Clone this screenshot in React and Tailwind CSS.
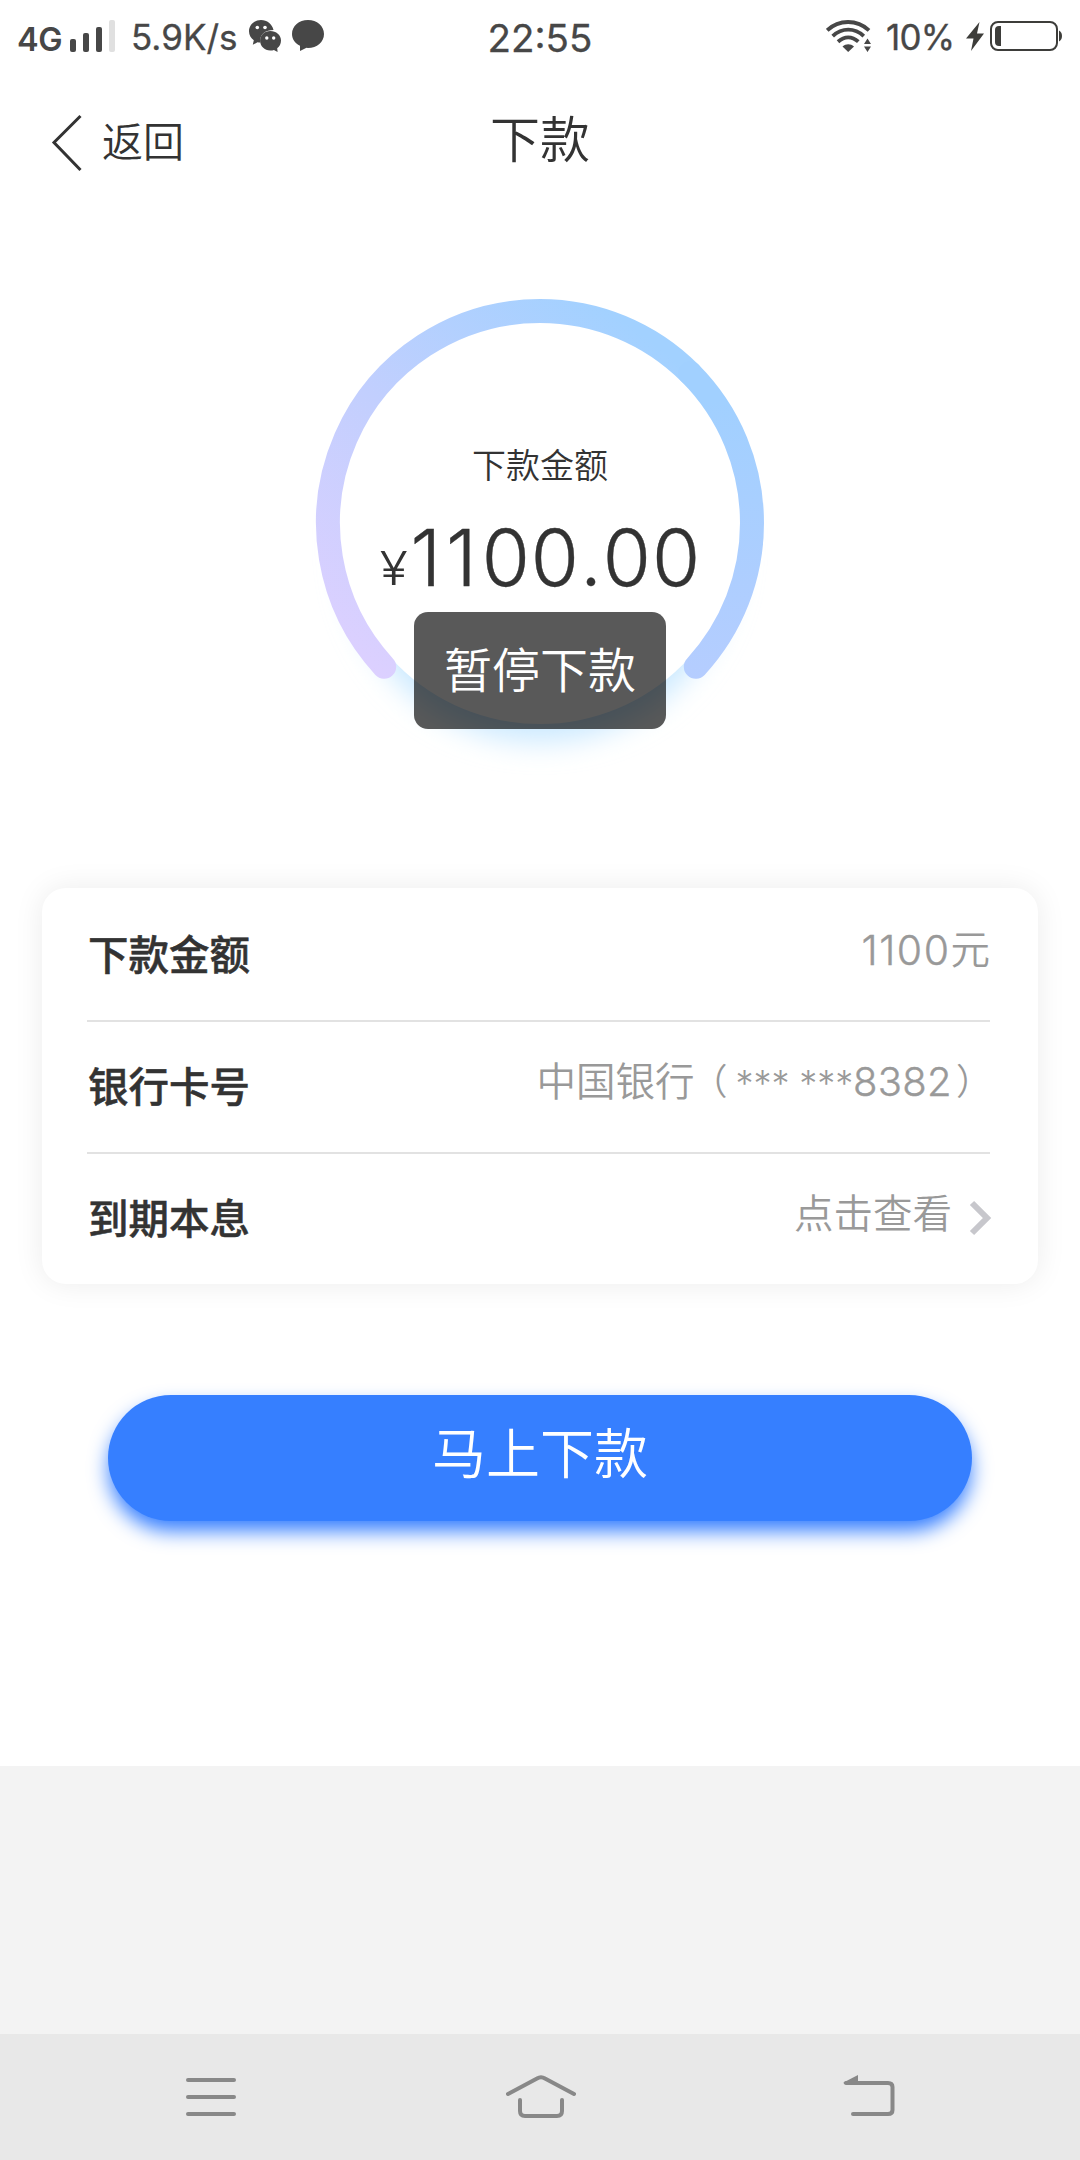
function StatusBar() {
  return (
    <div className="flex h-[72px] shrink-0 items-start justify-between text-[#474747]">
      <div className="flex items-start pl-[17px]">
        <span className="mt-[25px] w-[46px] text-[32.500px] leading-[30px] font-semibold tracking-[-0.5px]">4G</span>
        <div className="mt-5 ml-[7px] flex h-8 items-end gap-[7px]">
          <i className="h-[13px] w-[6px] rounded-[2px] bg-[#474747]" />
          <i className="h-[19px] w-[6px] rounded-[2px] bg-[#474747]" />
          <i className="h-[25px] w-[6px] rounded-[2px] bg-[#474747]" />
          <i className="h-8 w-[6px] rounded-[2px] bg-[#e0e0e0]" />
        </div>
        <span className="mt-[20px] ml-[16px] w-[109px] text-[35px] leading-[35px] whitespace-nowrap [-webkit-text-stroke:0.3px_#474747]">5.9K/s</span>
        <svg className="mt-5 ml-[9px] h-8 w-8" viewBox="0 0 32 32" fill="#474747">
          <path d="M12 0C5.400 0 0 4.900 0 11.200c0 4 2 7 4.800 9.100L3.800 24.800l4.700-2.600c1 .3 2 .4 2.900.4C10 15 16 10 24.500 10 23.200 4 18 0 12 0Z" />
          <path d="M21.300 11c-5.800 0-10.200 4-10.200 9.600S15.500 30.600 21.300 30.600c1.500 0 2.600-.3 3.600-.7L28.600 32l-.4-3.700c2.400-1.800 3.800-4.500 3.800-7.700 0-5.600-4.900-9.600-10.700-9.600Z" />
          <g fill="#fff">
            <circle cx="8.300" cy="7.500" r="1.800" />
            <circle cx="16" cy="7.500" r="1.800" />
            <circle cx="17.800" cy="18" r="1.700" />
            <circle cx="24.700" cy="18" r="1.700" />
          </g>
        </svg>
        <svg className="mt-5 ml-[11px] h-8 w-8" viewBox="0 0 32 32" fill="#474747">
          <path d="M16 0C7 0 0 6 0 14c0 5 2.800 9.300 8 11.800V31l6.500-3.200 1.500.2c9 0 16-6 16-14S25 0 16 0Z" />
        </svg>
      </div>
      <div className="flex items-start pr-[17px]">
        <svg className="mt-5 h-8 w-[46px]" viewBox="0 0 46 32" fill="none" stroke="#474747" strokeWidth="3.800">
          <path d="M1.200 10.300C13 -0.800 31 -0.800 43 10.300" />
          <path d="M6.700 16.100C16 7.500 28.500 7.500 37.800 16.100" />
          <path d="M12 21.700C18.500 16 26 16 32.300 21.700" />
          <path d="M16.500 26.500C20 23.500 24.500 23.500 28 26.500L22.200 32Z" fill="#474747" stroke="none" />
          <path d="M41.500 18.500L45 24H38ZM38 26.500H45L41.500 32Z" fill="#474747" stroke="none" />
        </svg>
        <span className="mt-[20px] ml-[14px] w-[72px] text-[35px] leading-[35px] tracking-[-0.8px] [-webkit-text-stroke:0.3px_#474747]">10%</span>
        <svg className="mt-[22px] ml-[8px] h-[29px] w-[18px]" viewBox="0 0 18 29" fill="#3d3d3a">
          <path d="M13.500 0L0 16.500H7.500L5 29L18 11.500H11Z" />
        </svg>
        <svg className="mt-[21px] ml-[6px] h-[30px] w-[73px]" viewBox="0 0 73 30">
          <rect x="1" y="1" width="66" height="28" rx="7" fill="none" stroke="#3d3d3a" strokeWidth="2" />
          <path d="M11 5V25H9a4 4 0 0 1-4-4V9a4 4 0 0 1 4-4Z" fill="#3d3d3a" />
          <path d="M69 9.500c2 1 3 3 3 5.500s-1 4.500-3 5.500Z" fill="#3d3d3a" />
        </svg>
      </div>
    </div>
  );
}

function Gauge() {
  return (
    <div className="relative mx-auto mt-[78px] h-[500px] w-[540px] shrink-0">
      <svg className="absolute inset-0" width="540" height="500" viewBox="270 280 540 500" fill="none">
        <defs>
          <linearGradient id="left" gradientUnits="userSpaceOnUse" x1="384" y1="680" x2="650" y2="340">
            <stop offset="0" stopColor="#dcd0ff" />
            <stop offset="0.500" stopColor="#c2cffe" />
            <stop offset="1" stopColor="#a2d1ff" />
          </linearGradient>
          <linearGradient id="right" gradientUnits="userSpaceOnUse" x1="700" y1="400" x2="690" y2="680">
            <stop offset="0" stopColor="#a1d0ff" />
            <stop offset="1" stopColor="#b5cdff" />
          </linearGradient>
          <filter id="soft" x="-20%" y="-20%" width="140%" height="140%">
            <feGaussianBlur stdDeviation="14" />
          </filter>
        </defs>
        <circle cx="540" cy="547" r="195" fill="#cbe9ff" filter="url(#soft)" />
        <circle cx="540" cy="523" r="201" fill="#fff" />
        <path d="M384.200 666.800A212 212 0 0 1 540 311A212 212 0 0 1 689.900 373.100" stroke="url(#left)" strokeWidth="24" strokeLinecap="round" />
        <path d="M689.900 373.100A212 212 0 0 1 752 523A212 212 0 0 1 695.800 666.800" stroke="url(#right)" strokeWidth="24" strokeLinecap="round" />
      </svg>
      <div className="relative flex flex-col items-center pt-[161px] text-[#333]">
        <span className="text-[34px] leading-[50px] font-[350]">下款金额</span>
        <div className="mt-[21px] ml-[2px] flex items-baseline font-light">
          <span className="mr-[4px] inline-block -translate-y-px scale-x-110 text-[47px] leading-[92px]">¥</span>
          <span className="text-[78px] leading-[92px] tracking-[0.9px] [-webkit-text-stroke:0.4px_#333] [font-kerning:none]">
            <span className="tracking-[5px]">11</span>00.00
          </span>
        </div>
      </div>
      <div className="absolute top-[332px] left-[144px] flex h-[117px] w-[252px] items-center justify-center rounded-[14px] bg-black/65 text-[48px] leading-[60px] font-[350] text-white">
        暂停下款
      </div>
    </div>
  );
}

function Row({ label, children, first, last }) {
  return (
    <div className={last ? "flex h-[130px] justify-between" : first ? "flex h-[134px] justify-between border-b-2 border-[#e2e2e2] pt-[2px]" : "flex h-[132px] justify-between border-b-2 border-[#e2e2e2]"}>
      <span className="pt-[36px] pl-[1px] text-[40.500px] leading-[60px] font-medium text-[#333] [-webkit-text-stroke:0.5px_#333]">{label}</span>
      <div className="flex pt-[30px] text-[39.500px] leading-[60px] font-[350] text-[#999] [font-kerning:none]">{children}</div>
    </div>
  );
}

export default function App() {
  return (
    <div className="flex h-[2160px] w-[1080px] flex-col overflow-hidden bg-white font-['Inter','Noto_Sans_CJK_SC',sans-serif]">
      <div className="relative">
        <StatusBar />
        <span className="absolute inset-x-0 top-[17px] text-center text-[38.500px] leading-[42px] text-[#474747] [-webkit-text-stroke:0.3px_#474747]">22:55</span>
      </div>
      <header className="grid h-[130px] shrink-0 grid-cols-3 text-[#333]">
        <div className="flex items-start pl-[51px]">
          <svg className="mt-[42px] h-[58px] w-[32px]" viewBox="0 0 32 58" fill="none" stroke="#333" strokeWidth="3">
            <path d="M29.500 2L3 28.500L29.500 56" />
          </svg>
          <span className="mt-[40px] ml-[19px] text-[41px] leading-[60px] font-[350]">返回</span>
        </div>
        <h1 className="mt-[38px] text-center text-[50px] leading-[60px] font-[350]">下款</h1>
      </header>
      <Gauge />
      <section className="mx-[42px] mt-[108px] h-[396px] shrink-0 rounded-[24px] bg-white pr-[48px] pl-[45px] shadow-[0_0_30px_rgba(0,0,0,0.080)]">
        <Row label="下款金额" first>
          <span className="text-[41px] font-light tracking-[1.500px] [-webkit-text-stroke:0.4px_#999]">1100</span>元
        </Row>
        <Row label="银行卡号">
          中国银行
          <span className="mr-[8px] ml-[-3px] text-[36px]">（</span>
          <span className="relative top-[1px] text-[36px] tracking-[-0.100px] whitespace-pre">*** ***</span>
          <span className="text-[40px] font-light tracking-[0.3px] [-webkit-text-stroke:0.4px_#999]">8382</span>
          <span className="mr-[-2px] ml-[4px] text-[36px]">）</span>
        </Row>
        <Row label="到期本息" last>
          点击查看
          <svg className="mt-[16px] mr-[-3px] ml-[17px] h-[36px] w-[24px]" viewBox="0 0 24 36" fill="none" stroke="#c7c7cc" strokeWidth="6">
            <path d="M3 3L18 18L3 33" />
          </svg>
        </Row>
      </section>
      <button className="mx-[108px] mt-[111px] h-[126px] shrink-0 rounded-full bg-[#367fff] pb-[6px] text-[54px] leading-[60px] font-[350] text-white shadow-[0_11px_20px_-1px_#367fff]">
        马上下款
      </button>
      <div className="mt-[245px] flex-1 bg-[#f3f3f3]" />
      <nav className="flex h-[126px] shrink-0 items-start bg-[#e8e8e8] pl-[186px]">
        <svg className="mt-[44px] h-[38px] w-[50px]" viewBox="0 0 50 38" stroke="#888" strokeWidth="4" strokeLinecap="round">
          <path d="M2 2H48M2 19H48M2 36H48" />
        </svg>
        <svg className="mt-[41px] ml-[270px] h-[44px] w-[70px]" viewBox="0 0 70 44" fill="none" stroke="#888" strokeWidth="4" strokeLinecap="round">
          <path d="M2 19L31 3.500Q35 1 39 3.500L68 19" />
          <path d="M14 25V36Q14 41 19 41H51Q56 41 56 36V25" />
        </svg>
        <svg className="mt-[41px] ml-[267px] h-[42px] w-[52px]" viewBox="0 0 52 42" fill="none" stroke="#888" strokeWidth="4" strokeLinecap="round">
          <path d="M3 8H45Q49.500 8 49.500 12V35Q49.500 39 45 39H10" />
          <path d="M0.500 7.500L15 0V9H1Z" fill="#888" stroke="none" />
        </svg>
      </nav>
    </div>
  );
}
